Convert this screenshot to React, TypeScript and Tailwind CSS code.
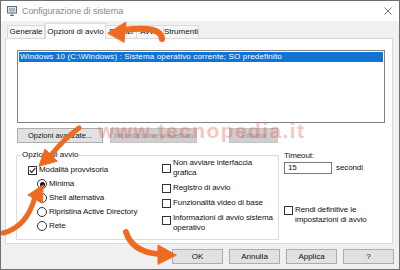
import React from "react";

function Check({ checked = false }: { checked?: boolean }) {
  return (
    <span className="w-[9px] h-[9px] border border-[#333333] bg-white shrink-0 flex items-center justify-center">
      {checked && (
        <svg width="7" height="7" viewBox="0 0 7 7">
          <path d="M0.8 3.4 L2.7 5.4 L6.3 1.1" fill="none" stroke="#222222" strokeWidth="1.1" />
        </svg>
      )}
    </span>
  );
}

function Radio({ checked = false }: { checked?: boolean }) {
  return (
    <span className="w-[10px] h-[10px] rounded-full border border-[#333333] bg-white shrink-0 flex items-center justify-center">
      {checked && <span className="w-[5px] h-[5px] rounded-full bg-[#111111]" />}
    </span>
  );
}

function Btn({
  children,
  className = "",
  disabled = false,
  text = "text-[8px]",
}: {
  children: React.ReactNode;
  className?: string;
  disabled?: boolean;
  text?: string;
}) {
  return (
    <div
      className={`h-[15px] flex items-center justify-center border whitespace-nowrap leading-[10px] ${text} ${
        disabled ? "bg-[#cfcfcf] border-[#c4c4c4] text-[#9b9b9b]" : "bg-[#e1e1e1] border-[#adadad] text-[#111111]"
      } ${className}`}
    >
      {children}
    </div>
  );
}

const tabs = [
  { label: "Generale", w: "w-[38px]" },
  { label: "Opzioni di avvio", w: "w-[61px]", active: true },
  { label: "Servizi", w: "w-[32px]" },
  { label: "Avvio", w: "w-[28px]" },
  { label: "Strumenti", w: "w-[36px]" },
];

export default function App() {
  return (
    <div className="relative w-[400px] h-[270px] overflow-hidden border border-[#6f6f6f] bg-[#f0f0f0] font-['Liberation_Sans',Arial,sans-serif] text-[#111111] select-none">
      {/* title bar */}
      <div className="h-[20px] bg-white flex items-center pl-[6px] pr-[7px]">
        <svg width="10" height="10" viewBox="0 0 10 10" className="shrink-0">
          <rect x="0.5" y="0.5" width="9" height="6.5" fill="#dfe6ee" stroke="#6a6a6a" />
          <rect x="2" y="2" width="6" height="3.5" fill="#9fb7cf" />
          <path d="M3 9.5 H7 M5 7 V9.5" stroke="#6a6a6a" />
        </svg>
        <span className="ml-[5px] text-[9px] leading-[10px] tracking-[-0.1px] text-[#8a8a8a]">Configurazione di sistema</span>
        <svg width="8" height="8" viewBox="0 0 8 8" className="ml-auto">
          <path d="M0.5 0.5 L7.5 7.5 M7.5 0.5 L0.5 7.5" stroke="#666666" strokeWidth="0.9" />
        </svg>
      </div>

      <div className="ml-[4px]">
        {/* tabs */}
        <div className="h-[17px] flex items-end pl-[2px]">
          {tabs.map((t) =>
            t.active ? (
              <div
                key={t.label}
                className={`${t.w} h-[16px] -mb-px relative z-10 bg-white border border-b-0 border-[#d9d9d9] flex items-center justify-center text-[8px] leading-[10px] whitespace-nowrap`}
              >
                {t.label}
              </div>
            ) : (
              <div
                key={t.label}
                className={`${t.w} h-[13px] bg-[#f7f7f7] border border-b-0 border-[#d9d9d9] flex items-center justify-center text-[8px] leading-[10px] whitespace-nowrap -ml-px first:ml-0`}
              >
                {t.label}
              </div>
            )
          )}
        </div>

        {/* panel */}
        <div className="w-[388px] h-[206px] border border-[#d9d9d9] bg-white pl-[10px] pt-[11px]">
          <div className="ml-px w-[368px] h-[73px] border border-[#828282] p-px">
            <div className="h-[10px] bg-[#0f74d6] text-white text-[8px] tracking-[0.15px] leading-[10px] pl-px whitespace-nowrap">
              Windows 10 (C:\Windows) : Sistema operativo corrente; SO predefinito
            </div>
          </div>

          <div className="flex mt-[5px] ml-px">
            <Btn className="w-[86px]" text="text-[7.5px]">
              Opzioni avanzate...
            </Btn>
            <Btn className="w-[87px] ml-[7px]" text="text-[7.5px] tracking-[-0.2px]" disabled>
              Imposta come predefinito
            </Btn>
            <Btn className="w-[49px] ml-[32px]" text="text-[7.5px]" disabled>
              Elimina
            </Btn>
          </div>

          <div className="flex mt-[7px]">
            <fieldset className="w-[263px] h-[90px] border border-[#dcdcdc] px-[4px] m-0">
              <legend className="px-px text-[8px] leading-[10px]">Opzioni di avvio</legend>
              <div className="flex ml-[7px] text-[8px] leading-[10px] tracking-[-0.1px]">
                <div className="w-[134px] pt-[3px] flex flex-col">
                  <div className="h-[14px] flex items-center gap-[2px]">
                    <Check checked />
                    <span>Modalità provvisoria</span>
                  </div>
                  <div className="h-[14px] flex items-center gap-[2px] ml-[9px]">
                    <Radio checked />
                    <span>Minima</span>
                  </div>
                  <div className="h-[14px] flex items-center gap-[2px] ml-[9px]">
                    <Radio />
                    <span>Shell alternativa</span>
                  </div>
                  <div className="h-[14px] flex items-center gap-[2px] ml-[9px]">
                    <Radio />
                    <span>Ripristina Active Directory</span>
                  </div>
                  <div className="h-[14px] flex items-center gap-[2px] ml-[9px]">
                    <Radio />
                    <span>Rete</span>
                  </div>
                </div>
                <div className="-mt-[2px] flex flex-col gap-[5px]">
                  <div className="flex items-center gap-[2px]">
                    <Check />
                    <span>
                      Non avviare interfaccia
                      <br />
                      grafica
                    </span>
                  </div>
                  <div className="flex items-center gap-[2px]">
                    <Check />
                    <span>Registro di avvio</span>
                  </div>
                  <div className="flex items-center gap-[2px]">
                    <Check />
                    <span>Funzionalità video di base</span>
                  </div>
                  <div className="flex items-start gap-[2px]">
                    <span className="mt-[3px]">
                      <Check />
                    </span>
                    <span className="whitespace-nowrap">
                      Informazioni di avvio sistema
                      <br />
                      operativo
                    </span>
                  </div>
                </div>
              </div>
            </fieldset>

            <div className="ml-[5px] pt-px text-[8px] leading-[10px] tracking-[-0.1px]">
              <div>Timeout:</div>
              <div className="flex items-center mt-px">
                <div className="w-[48px] h-[12px] border border-[#7a7a7a] bg-white pl-[3px] flex items-center">15</div>
                <span className="ml-[4px]">secondi</span>
              </div>
              <div className="flex items-start gap-[2px] mt-[31px]">
                <span className="mt-px">
                  <Check />
                </span>
                <span className="whitespace-nowrap">
                  Rendi definitive le
                  <br />
                  impostazioni di avvio
                </span>
              </div>
            </div>
          </div>
        </div>

        {/* bottom buttons */}
        <div className="flex justify-end gap-[6px] mt-[5px] pr-[5px]">
          <Btn className="w-[51px]">OK</Btn>
          <Btn className="w-[51px]">Annulla</Btn>
          <Btn className="w-[51px]">Applica</Btn>
          <Btn className="w-[51px]">?</Btn>
        </div>
      </div>

      {/* watermark */}
      <div className="absolute left-[97px] top-[119px] text-[21px] leading-[22px] font-bold text-[#e0483a] opacity-30 tracking-[1.4px] pointer-events-none whitespace-nowrap">
        www.tecnopedia.it
      </div>

      {/* orange arrows */}
      <svg className="absolute left-0 top-0 pointer-events-none" width="400" height="270" viewBox="0 0 400 270">
        <g fill="#ef6a21" stroke="#ef6a21" strokeLinecap="round" strokeLinejoin="round">
          <path d="M161 38 Q160 24 123 29" fill="none" strokeWidth="6" />
          <path d="M107 32 L125 21 L123 41 Z" strokeWidth="1" />

          <path d="M78 127 Q64 137 50 154" fill="none" strokeWidth="5" />
          <path d="M38 165 L44 148 L56 160 Z" strokeWidth="1" />

          <path d="M2 232 Q26 226 34 196" fill="none" strokeWidth="5" />
          <path d="M42 184 L27 194 L41 202 Z" strokeWidth="1" />

          <path d="M125 231 Q131 251 158 253" fill="none" strokeWidth="6" />
          <path d="M175 254 L157 244 L157 263 Z" strokeWidth="1" />
        </g>
      </svg>
    </div>
  );
}
